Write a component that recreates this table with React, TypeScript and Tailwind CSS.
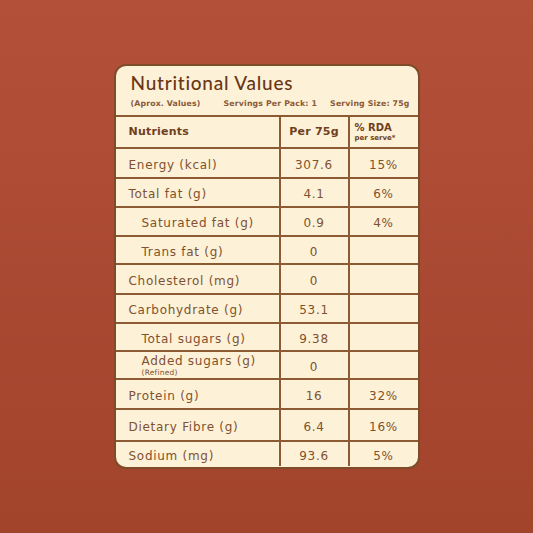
import React from 'react';

type Row = { name: string; per: string; rda: string; h: string; indent?: boolean; note?: string };

const rows: Row[] = [
  { name: 'Energy (kcal)', per: '307.6', rda: '15%', h: 'h-[30px]' },
  { name: 'Total fat (g)', per: '4.1', rda: '6%', h: 'h-[29px]' },
  { name: 'Saturated fat (g)', per: '0.9', rda: '4%', h: 'h-[29px]', indent: true },
  { name: 'Trans fat (g)', per: '0', rda: '', h: 'h-[28px]', indent: true },
  { name: 'Cholesterol (mg)', per: '0', rda: '', h: 'h-[30px]' },
  { name: 'Carbohydrate (g)', per: '53.1', rda: '', h: 'h-[29px]' },
  { name: 'Total sugars (g)', per: '9.38', rda: '', h: 'h-[28px]', indent: true },
  { name: 'Added sugars (g)', per: '0', rda: '', h: 'h-[28px]', indent: true, note: '(Refined)' },
  { name: 'Protein (g)', per: '16', rda: '32%', h: 'h-[30px]' },
  { name: 'Dietary Fibre (g)', per: '6.4', rda: '16%', h: 'h-[32px]' },
  { name: 'Sodium (mg)', per: '93.6', rda: '5%', h: 'h-[26px]' },
];

export default function App() {
  return (
    <div className="w-[533px] h-[533px] flex items-center justify-center bg-gradient-to-b from-[#b3503a] to-[#a2432c] font-['DejaVu_Sans',sans-serif]">
      <div className="w-[306px] h-[405px] rounded-[12px] border-2 border-[#7e4c28] bg-[#fdf1d8] overflow-hidden flex flex-col">
        <div className="h-[49px] pl-[15px] pr-[8px] pt-[4px]">
          <div className="font-['Lato',sans-serif] text-[19px] leading-[26px] tracking-[0.04em] text-[#6a3615] font-medium">Nutritional Values</div>
          <div className="flex mt-[3px] text-[7.8px] leading-[10px] font-bold tracking-[0.02em] text-[#8a5a38]">
            <span>(Aprox. Values)</span>
            <span className="ml-auto mr-[13px]">Servings Per Pack: 1</span>
            <span>Serving Size: 75g</span>
          </div>
        </div>
        <div className="flex h-[32px] border-t-2 border-[#8d5b33] text-[#6e4020] font-bold">
          <div className="w-[163px] flex items-center pl-[13px] text-[11px] tracking-[0.02em]">Nutrients</div>
          <div className="w-[69px] border-l-2 border-[#8d5b33] flex items-center justify-center text-[11px] tracking-[0.02em]">Per 75g</div>
          <div className="flex-1 border-l-2 border-[#8d5b33] flex flex-col justify-center pl-[5px]">
            <span className="text-[10px] leading-[10px]">% RDA</span>
            <span className="text-[7px] leading-[8px] mt-[1px]">per serve*</span>
          </div>
        </div>
        {rows.map((r) => (
          <div key={r.name} className={`flex ${r.h} border-t-2 border-[#8d5b33] text-[#80512f] text-[12px] tracking-[0.06em]`}>
            <div className={`w-[163px] flex flex-col justify-center ${r.note ? 'pt-[1px]' : 'pt-[3px]'} ${r.indent ? 'pl-[26px]' : 'pl-[13px]'}`}>
              <span className={r.note ? 'leading-[14px]' : ''}>{r.name}</span>
              {r.note && <span className="text-[7.5px] leading-[9px] tracking-[0.03em]">{r.note}</span>}
            </div>
            <div className="w-[69px] border-l-2 border-[#8d5b33] flex items-center justify-center pt-[3px]">{r.per}</div>
            <div className="flex-1 border-l-2 border-[#8d5b33] flex items-center justify-center pt-[3px]">{r.rda}</div>
          </div>
        ))}
      </div>
    </div>
  );
}
